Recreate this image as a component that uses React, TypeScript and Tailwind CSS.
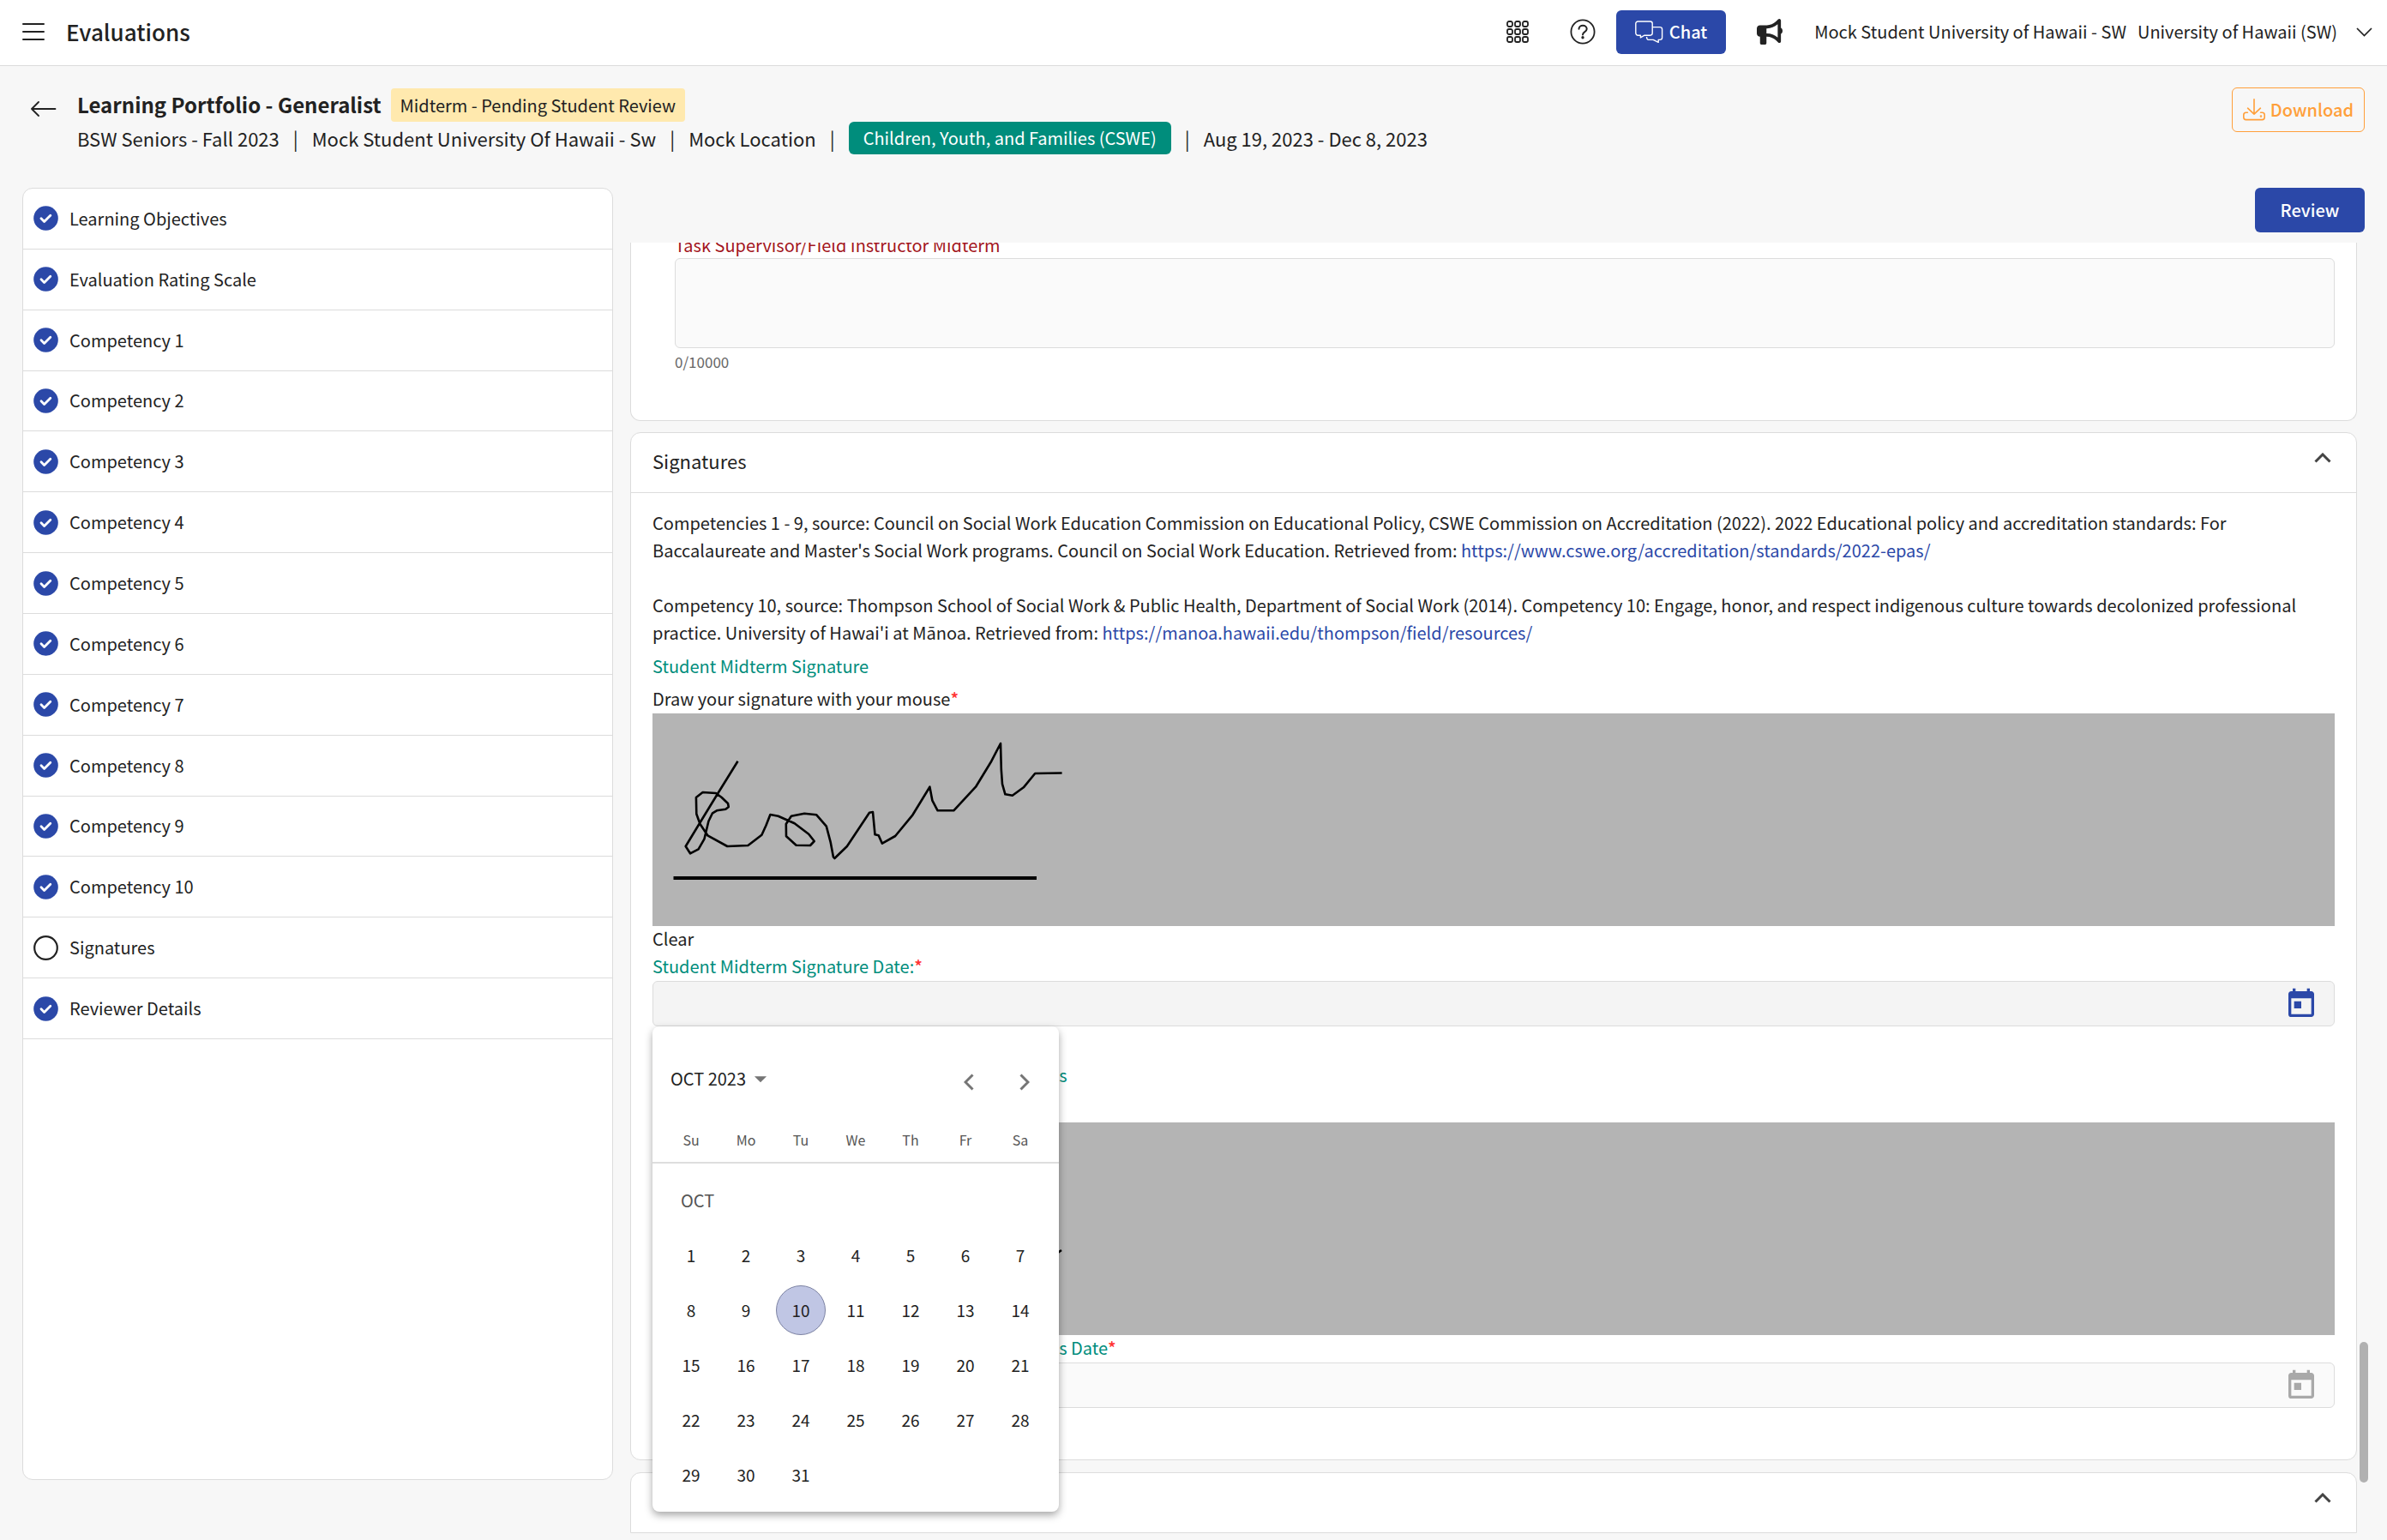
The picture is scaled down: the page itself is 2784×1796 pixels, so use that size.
import React from 'react';
import { FaBullhorn } from 'react-icons/fa6';
import { MdArrowDropDown, MdToday } from 'react-icons/md';

const sections = [
  { name: 'Learning Objectives', done: true },
  { name: 'Evaluation Rating Scale', done: true },
  { name: 'Competency 1', done: true },
  { name: 'Competency 2', done: true },
  { name: 'Competency 3', done: true },
  { name: 'Competency 4', done: true },
  { name: 'Competency 5', done: true },
  { name: 'Competency 6', done: true },
  { name: 'Competency 7', done: true },
  { name: 'Competency 8', done: true },
  { name: 'Competency 9', done: true },
  { name: 'Competency 10', done: true },
  { name: 'Signatures', done: false },
  { name: 'Reviewer Details', done: true },
];

const weekdays = ['Su', 'Mo', 'Tu', 'We', 'Th', 'Fr', 'Sa'];
const days = Array.from({ length: 31 }, (_, i) => i + 1);
const today = 10;

function MenuIcon() {
  return (
    <svg width="26" height="20" viewBox="0 0 26 20" stroke="#222" strokeWidth="2" strokeLinecap="round">
      <path d="M1 1h24M1 10h24M1 19h24" />
    </svg>
  );
}

function AppsIcon() {
  const steps = [0, 9, 18];
  return (
    <svg width="26" height="26" viewBox="0 0 26 26" fill="none" stroke="#222" strokeWidth="1.8">
      {steps.map((y) => steps.map((x) => <rect key={`${x}-${y}`} x={x + 1} y={y + 1} width="6" height="6" rx="2" />))}
    </svg>
  );
}

function HelpIcon() {
  return (
    <svg width="30" height="30" viewBox="0 0 30 30" fill="none" stroke="#222" strokeWidth="1.8" strokeLinecap="round">
      <circle cx="15" cy="15" r="13.6" />
      <path d="M10.5 11.8c0-5.4 9.2-5.4 9.2 0 0 3.4-4.7 3.2-4.7 6.6" strokeWidth="2" />
      <circle cx="15" cy="21.8" r="0.8" fill="#222" />
    </svg>
  );
}

function ChatIcon() {
  return (
    <svg width="33" height="27" viewBox="0 0 33 27" fill="none" stroke="#fff" strokeWidth="1.4" strokeLinejoin="round">
      <path d="M3.4 1h14.2a2.6 2.6 0 0 1 2.6 2.6v11a2.6 2.6 0 0 1-2.6 2.6H11l-4.6 2.6v-2.6H3.4a2.6 2.6 0 0 1-2.6-2.6v-11A2.6 2.6 0 0 1 3.4 1z" />
      <path d="M20.2 7.6h8.8a2.6 2.6 0 0 1 2.6 2.6v9.6a2.6 2.6 0 0 1-2.6 2.6h-1.8v3l-6-3h-5a2.6 2.6 0 0 1-2.6-2.6v-.8" />
    </svg>
  );
}

function DownloadIcon() {
  return (
    <svg width="26" height="26" viewBox="0 0 26 26" fill="none" stroke="#ff9f3a" strokeWidth="1.6" strokeLinecap="round" strokeLinejoin="round">
      <path d="M13 .8v17.4M5.6 11.2l7.4 7 7.4-7" />
      <path d="M5.4 16.2H3.6a2.8 2.8 0 0 0-2.8 2.8v2.8a2.8 2.8 0 0 0 2.8 2.8h18.8a2.8 2.8 0 0 0 2.8-2.8V19a2.8 2.8 0 0 0-2.8-2.8h-1.8" />
      <circle cx="21" cy="20.6" r="0.5" />
    </svg>
  );
}

function ChevronUp() {
  return (
    <svg width="20" height="12" viewBox="0 0 20 12" fill="none" stroke="#444" strokeWidth="3">
      <path d="M1.5 10.5 10 2l8.5 8.5" />
    </svg>
  );
}

function StatusIcon({ done }: { done: boolean }) {
  return (
    <svg width="29" height="29" viewBox="0 0 29 29" fill="none" className="shrink-0">
      {done ? (
        <>
          <circle cx="14.5" cy="14.5" r="14.3" fill="#2b48a8" />
          <path d="m9 14.8 3.6 3.6 7.2-7.2" stroke="#fff" strokeWidth="2.8" strokeLinecap="round" strokeLinejoin="round" />
        </>
      ) : (
        <circle cx="14.5" cy="14.5" r="13.3" stroke="#222" strokeWidth="2.2" />
      )}
    </svg>
  );
}

function Required() {
  return <span className="font-medium text-[#ff3333]">*</span>;
}

function PanelHeader({ title }: { title: string }) {
  return (
    <button type="button" aria-label={title || 'Toggle panel'} className="flex h-[69px] w-full items-center justify-between px-[25px] pb-[6px]">
      <span className="text-[22px]">{title}</span>
      <span className="pr-1 pb-[6px]">
        <ChevronUp />
      </span>
    </button>
  );
}

function SignaturePad({ label, children }: { label: string; children: React.ReactNode }) {
  return (
    <div role="img" aria-label={label} className="h-[248px] bg-[#b4b4b4]">
      <svg width="500" height="248" viewBox="0 0 500 248" fill="none" stroke="#000" strokeWidth="2.6" strokeLinejoin="round">
        {children}
        <path d="M24.5 192H448" strokeWidth="4" />
      </svg>
    </div>
  );
}

function DateField({ id, disabled = false }: { id: string; disabled?: boolean }) {
  return (
    <div
      className={`flex h-[53px] items-center rounded-md border border-[#dcdcdc] pr-[18px] ${
        disabled ? 'bg-[#fafafa] text-[#a9a9a9]' : 'bg-[#f4f4f4] text-[#2b48a8]'
      }`}
    >
      <input id={id} type="text" disabled={disabled} className="h-full flex-1 px-3 text-[20px] outline-none" />
      <button type="button" aria-label="Open calendar" disabled={disabled}>
        <MdToday className="size-[40px]" />
      </button>
    </div>
  );
}

function Calendar() {
  return (
    <div className="absolute top-full left-0 z-10 w-[474px] rounded-lg bg-white pb-[11px] shadow-[0_4px_10px_rgba(0,0,0,0.35)]">
      <div className="flex h-[120px] items-center pt-[2px] pr-5 pl-[21px]">
        <button type="button" className="flex items-center">
          OCT 2023
          <MdArrowDropDown className="size-[34px] text-[#757575]" />
        </button>
        <div className="mt-2 ml-auto flex gap-[25px]">
          <button type="button" aria-label="Previous month" className="flex size-10 items-center justify-center">
            <svg width="12" height="20" viewBox="0 0 12 20" fill="none" stroke="#757575" strokeWidth="3">
              <path d="M10.5 1.5 2 10l8.5 8.5" />
            </svg>
          </button>
          <button type="button" aria-label="Next month" className="flex size-10 items-center justify-center">
            <svg width="12" height="20" viewBox="0 0 12 20" fill="none" stroke="#757575" strokeWidth="3">
              <path d="M1.5 1.5 10 10l-8.5 8.5" />
            </svg>
          </button>
        </div>
      </div>
      <div className="grid grid-cols-7 border-b-2 border-[#dedede] px-[13px] pb-[14px] text-center text-[16px] leading-[24px] text-[#555]">
        {weekdays.map((day) => (
          <span key={day}>{day}</span>
        ))}
      </div>
      <div className="grid auto-rows-[64px] grid-cols-7 place-items-center px-[13px] pt-[11px] text-[19px]">
        <span className="col-span-7 justify-self-start pl-[20px] text-[20px] text-[#555]">OCT</span>
        {days.map((day) => (
          <button
            key={day}
            type="button"
            className={day === today ? 'size-[58px] rounded-full border border-[#7d83a3] bg-[#c0c6e4]' : 'size-[58px] rounded-full'}
          >
            {day}
          </button>
        ))}
      </div>
    </div>
  );
}

export default function App() {
  return (
    <div className="flex min-h-screen flex-col bg-[#f7f7f7] font-['Noto_Sans_CJK_SC','Source_Sans_3',sans-serif] text-[20px] leading-[30px] text-[#222]">
      <header className="flex h-[77px] items-center border-b border-[#dcdcdc] bg-white pr-[17px] pb-[2px] pl-[26px]">
        <button type="button" aria-label="Menu">
          <MenuIcon />
        </button>
        <h1 className="ml-[25px] text-[26px] font-medium">Evaluations</h1>
        <button type="button" aria-label="Apps" className="ml-auto">
          <AppsIcon />
        </button>
        <button type="button" aria-label="Help" className="ml-[48px]">
          <HelpIcon />
        </button>
        <button type="button" className="ml-6 flex h-[51px] items-center gap-[7px] rounded-md bg-[#2b48a8] px-[22px] font-medium text-white">
          <ChatIcon />
          Chat
        </button>
        <button type="button" aria-label="Announcements" className="ml-[36px]">
          <FaBullhorn className="size-[30px]" />
        </button>
        <button type="button" className="ml-[37px] flex items-center">
          <span>Mock Student University of Hawaii - SW</span>
          <span className="ml-[13px]">University of Hawaii (SW)</span>
          <svg className="ml-[22px]" width="19" height="11" viewBox="0 0 19 11" fill="none" stroke="#222" strokeWidth="1.7">
            <path d="m1 1 8.5 8.5L18 1" />
          </svg>
        </button>
      </header>

      <div className="flex items-start pt-[25px] pr-[26px] pl-[36px]">
        <button type="button" aria-label="Back" className="mt-[12px] mr-[24px]">
          <svg width="30" height="26" viewBox="0 0 30 26" fill="none" stroke="#222" strokeWidth="1.8" strokeLinecap="round" strokeLinejoin="round">
            <path d="M28.5 13H1.5M9 5l-8 8 8 8" />
          </svg>
        </button>
        <div>
          <div className="flex h-[40px] items-center gap-[11px]">
            <h2 className="text-[24px] font-bold">Learning Portfolio - Generalist</h2>
            <span className="rounded-sm bg-[#ffe9ae] px-[11px] py-1 leading-[31px]">Midterm - Pending Student Review</span>
          </div>
          <div className="flex h-[38px] items-center gap-[16px] text-[22px]">
            <span>BSW Seniors - Fall 2023</span>
            <span>|</span>
            <span>Mock Student University Of Hawaii - Sw</span>
            <span>|</span>
            <span>Mock Location</span>
            <span>|</span>
            <span className="rounded-md bg-[#008d7c] px-[17px] text-[20px] leading-[38px] text-white">Children, Youth, and Families (CSWE)</span>
            <span>|</span>
            <span>Aug 19, 2023 - Dec 8, 2023</span>
          </div>
        </div>
        <button type="button" className="ml-auto flex h-[52px] items-center gap-[6px] rounded-md border border-[#ff9f3a] px-[12px] font-medium text-[#ff9f3a]">
          <DownloadIcon />
          Download
        </button>
      </div>

      <div className="mt-[39px] grid flex-1 grid-cols-[689px_1fr] gap-5 pr-[22px] pl-[26px]">
        <nav className="mb-[71px] rounded-xl border border-[#dcdcdc] bg-white">
          <ul className="grid h-[992px] auto-rows-fr">
            {sections.map((section) => (
              <li key={section.name} className="border-b border-[#dcdcdc]">
                <a href="#" className="flex h-full items-center gap-[13px] px-3">
                  <StatusIcon done={section.done} />
                  {section.name}
                </a>
              </li>
            ))}
          </ul>
        </nav>

        <main className="flex flex-col">
          <div className="flex h-[64px] justify-end pr-1 pb-3">
            <button type="button" className="w-[128px] rounded-md bg-[#2b48a8] font-medium text-white">
              Review
            </button>
          </div>

          <div className="flex flex-1 gap-[3px]">
            <div className="flex-1">
              <section className="rounded-b-xl border border-t-0 border-[#dcdcdc] bg-white pr-[25px] pb-[56px] pl-[51px]">
                {/* top of this card is scrolled out of view */}
                <label htmlFor="supervisor-comment" className="flex h-[18px] items-end overflow-hidden text-[#a31621]">
                  Task Supervisor/Field Instructor Midterm
                </label>
                <textarea id="supervisor-comment" disabled className="block h-[105px] w-full resize-none rounded-md border border-[#dcdcdc] bg-[#fafafa] p-3" />
                <p className="mt-1 text-[17px] leading-[24px] text-[#666]">0/10000</p>
              </section>

              <section className="mt-[13px] rounded-xl border border-[#dcdcdc] bg-white">
                <PanelHeader title="Signatures" />
                <div className="border-t border-[#dcdcdc] px-[25px] pt-[19px] pb-[60px]">
                  <p className="leading-[32px]">
                    Competencies 1 - 9, source: Council on Social Work Education Commission on Educational Policy, CSWE Commission on Accreditation (2022). 2022
                    Educational policy and accreditation standards: For Baccalaureate and Master's Social Work programs. Council on Social Work Education.
                    Retrieved from:{' '}
                    <a href="https://www.cswe.org/accreditation/standards/2022-epas/" className="text-[#2b48a8]">
                      https://www.cswe.org/accreditation/standards/2022-epas/
                    </a>
                  </p>
                  <p className="mt-[32px] leading-[32px]">
                    Competency 10, source: Thompson School of Social Work & Public Health, Department of Social Work (2014). Competency 10: Engage, honor, and
                    respect indigenous culture towards decolonized professional practice. University of Hawai'i at Mānoa. Retrieved from:{' '}
                    <a href="https://manoa.hawaii.edu/thompson/field/resources/" className="text-[#2b48a8]">
                      https://manoa.hawaii.edu/thompson/field/resources/
                    </a>
                  </p>

                  <h3 className="my-2 text-[#008d7c]">Student Midterm Signature</h3>
                  <p className="mb-[2px]">
                    Draw your signature with your mouse
                    <Required />
                  </p>
                  <SignaturePad label="Student signature">
                    <path d="M99.5 55.7 75.8 94 55.5 127.3 38.7 155 44 163.3 53.6 158.3 60.5 146.3 65.4 125.7 70 116.3 75 113.3 85.3 111.7 88.8 109 88 105 80.7 98 73.9 93 58.6 92 50.9 98 51.3 117.3 55.5 129 64.3 142.3 87.3 155 111.4 154 127.4 141.7 132.4 130.7 137.4 118 146.6 119.7 165.7 128.3 182.2 140.7 188.7 149 184 154 167.6 153.7 156 143.3 155.8 129 161.9 119.7 177.2 116.7 191.3 118.3 202.8 131.7 207.8 150.7 210.9 167.3 212.4 169 226.9 155 253 115.7 257 115 259.5 141.3 263.7 142.3 267.9 151.7 283.2 143 303.5 118.3 323.4 85.7 326.4 101.7 332.6 113.3 351.3 113.3 377 85.7 395.3 55.7 406 35 406.8 65.7 408 82.3 411.4 94.3 419.8 95.7 432.8 86.3 446.2 70 477.6 69.5" />
                  </SignaturePad>
                  <button type="button" className="block">
                    Clear
                  </button>
                  <label htmlFor="student-date" className="my-[2px] block text-[#008d7c]">
                    Student Midterm Signature Date:
                    <Required />
                  </label>
                  <div className="relative">
                    <DateField id="student-date" />
                    <Calendar />
                  </div>

                  <h3 className="mt-[42px] mb-2 text-[#008d7c]">Task Supervisor/Field Instructor Midterm Signatures</h3>
                  <p className="mb-[2px]">
                    Draw your signature with your mouse
                    <Required />
                  </p>
                  <SignaturePad label="Supervisor signature">
                    <path d="M440 160 458 146 470 154 477 149" />
                  </SignaturePad>
                  <label htmlFor="supervisor-date" className="mb-[2px] block text-[#008d7c]">
                    Task Supervisor/Field Instructor Midterm Signatures Date
                    <Required />
                  </label>
                  <DateField id="supervisor-date" disabled />
                </div>
              </section>

              <section className="mt-[14px] mb-[9px] rounded-t-xl border border-[#dcdcdc] bg-white">
                <PanelHeader title="" />
              </section>
            </div>

            {/* scroll track */}
            <div className="relative w-[10px]">
              <div className="absolute bottom-[68px] h-[164px] w-full rounded-full bg-[#b1b1b1]" />
            </div>
          </div>
        </main>
      </div>
    </div>
  );
}
